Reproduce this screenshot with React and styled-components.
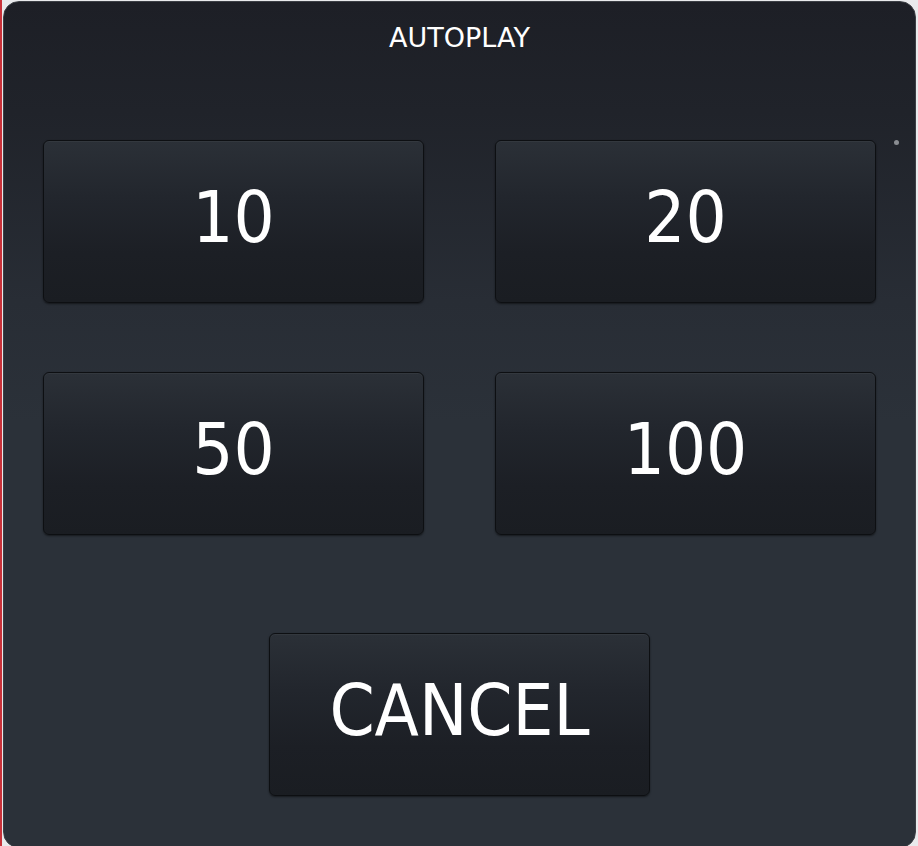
import React from "react";
import styled, { createGlobalStyle } from "styled-components";

const Global = createGlobalStyle`
  html, body { margin: 0; padding: 0; background: #e9eaec; }
  body { font-family: "DejaVu Sans Condensed", "DejaVu Sans", sans-serif; }
`;

const Page = styled.div`
  width: 918px;
  height: 846px;
  box-sizing: border-box;
  padding: 1px 2px 0 1px;
  border-left: 2px solid #c8323a;
  overflow: hidden;
`;

const Panel = styled.div`
  position: relative;
  box-sizing: border-box;
  width: 913px;
  height: 847px;
  border: 1px solid #3c3f45;
  border-radius: 16px;
  background: linear-gradient(
    to bottom,
    #1d1f26 0px,
    #20232a 110px,
    #282d35 300px,
    #2b3139 420px,
    #2b3139 100%
  );
  display: flex;
  flex-direction: column;
  align-items: center;
  padding: 21px 40px 0 40px;
`;

const Title = styled.h1`
  margin: 0;
  font-family: "DejaVu Sans", sans-serif;
  font-size: 27px;
  line-height: 30px;
  font-weight: normal;
  color: #ffffff;
`;

const Grid = styled.div`
  margin-top: 87px;
  display: grid;
  grid-template-columns: 381px 381px;
  grid-auto-rows: 163px;
  column-gap: 71px;
  row-gap: 69px;
`;

const Choice = styled.button`
  box-sizing: border-box;
  width: ${(p) => (p.$wide ? "381px" : "100%")};
  height: 163px;
  margin: 0;
  padding: 0 0 10px 0;
  border: 1px solid #0d0f12;
  border-radius: 6px;
  background: linear-gradient(
    to bottom,
    #2b3037 0%,
    #22262d 35%,
    #1c1f25 70%,
    #1a1d22 100%
  );
  box-shadow: inset 0 1px 0 rgba(255, 255, 255, 0.04), 0 1px 2px rgba(0, 0, 0, 0.5);
  color: #ffffff;
  font-family: "DejaVu Sans Condensed", "DejaVu Sans", sans-serif;
  font-size: 72px;
  font-weight: normal;
  line-height: 1;
  display: flex;
  align-items: center;
  justify-content: center;
  cursor: pointer;
`;

const CancelRow = styled.div`
  margin-top: 98px;
  display: flex;
  justify-content: center;
`;

const Dot = styled.span`
  position: absolute;
  top: 138px;
  right: 16px;
  width: 5px;
  height: 5px;
  border-radius: 50%;
  background: #8a8d92;
`;

export default function App() {
  const values = ["10", "20", "50", "100"];
  return (
    <>
      <Global />
      <Page>
        <Panel>
          <Title>AUTOPLAY</Title>
          <Dot />
          <Grid>
            {values.map((v) => (
              <Choice key={v}>{v}</Choice>
            ))}
          </Grid>
          <CancelRow>
            <Choice $wide>CANCEL</Choice>
          </CancelRow>
        </Panel>
      </Page>
    </>
  );
}
